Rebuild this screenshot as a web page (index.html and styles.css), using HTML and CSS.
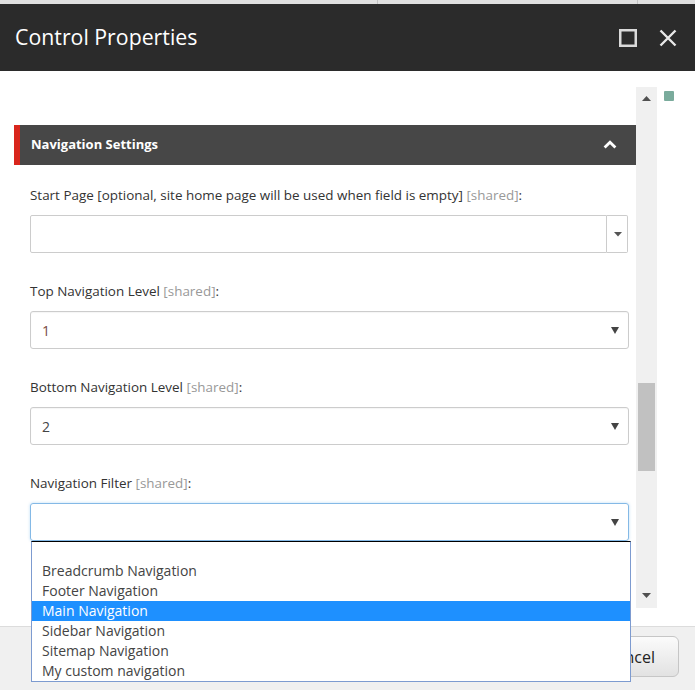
FILE: index.html
```html
<!DOCTYPE html>
<html lang="en">
<head>
<meta charset="utf-8">
<title>Control Properties</title>
<link rel="stylesheet" href="styles.css">
</head>
<body>
<div class="dialog">
  <div class="topstrip">
    <span class="seg seg-a"></span>
    <span class="seg seg-b"></span>
    <span class="seg seg-c"></span>
  </div>
  <header class="titlebar">
    <h1 class="title">Control Properties</h1>
    <div class="winbtns">
      <svg class="wbtn" width="18" height="18" viewBox="0 0 18 18"><rect x="1.25" y="1.25" width="15.5" height="15.5" fill="none" stroke="#dadada" stroke-width="2.5"/></svg>
      <svg class="wbtn" width="18" height="18" viewBox="0 0 18 18"><path d="M1.5 1.5 L16.5 16.5 M16.5 1.5 L1.5 16.5" stroke="#e8e8e8" stroke-width="2.4" fill="none"/></svg>
    </div>
  </header>
  <main class="body">
    <div class="pane">
      <div class="scroller">
        <div class="section-bar">
          <span class="section-title">Navigation Settings</span>
          <svg class="chev" width="14" height="9" viewBox="0 0 14 9"><path d="M1.6 7.6 L7 2.2 L12.4 7.6" stroke="#fff" stroke-width="2.8" fill="none" stroke-linejoin="miter"/></svg>
        </div>
        <div class="fields">
          <div class="field">
            <label class="field-label">Start Page [optional, site home page will be used when field is empty] <span class="shared">[shared]</span>:</label>
            <div class="combo">
              <div class="combo-input"></div>
              <div class="combo-btn"><svg width="8" height="5" viewBox="0 0 8 5"><path d="M0 0 H8 L4 4.5 Z" fill="#555"/></svg></div>
            </div>
          </div>
          <div class="field">
            <label class="field-label">Top Navigation Level <span class="shared">[shared]</span>:</label>
            <div class="select"><span class="select-value value-one">1</span><svg class="caret" width="8" height="7" viewBox="0 0 8 7"><path d="M0 0 H8 L4 7 Z" fill="#444"/></svg></div>
          </div>
          <div class="field">
            <label class="field-label">Bottom Navigation Level <span class="shared">[shared]</span>:</label>
            <div class="select"><span class="select-value">2</span><svg class="caret" width="8" height="7" viewBox="0 0 8 7"><path d="M0 0 H8 L4 7 Z" fill="#444"/></svg></div>
          </div>
          <div class="field field-open">
            <label class="field-label">Navigation Filter <span class="shared">[shared]</span>:</label>
            <div class="select select-focus"><span class="select-value"></span><svg class="caret" width="8" height="7" viewBox="0 0 8 7"><path d="M0 0 H8 L4 7 Z" fill="#444"/></svg></div>
            <ul class="listbox">
              <li class="opt opt-empty"></li>
              <li class="opt">Breadcrumb Navigation</li>
              <li class="opt">Footer Navigation</li>
              <li class="opt opt-selected">Main Navigation</li>
              <li class="opt">Sidebar Navigation</li>
              <li class="opt">Sitemap Navigation</li>
              <li class="opt">My custom navigation</li>
            </ul>
          </div>
        </div>
      </div>
      <div class="scrollbar">
        <div class="sb-btn sb-up"><svg width="9" height="5" viewBox="0 0 9 5"><path d="M0 5 H9 L4.5 0 Z" fill="#505050"/></svg></div>
        <div class="sb-track"><div class="sb-thumb"></div></div>
        <div class="sb-btn sb-down"><svg width="9" height="5" viewBox="0 0 9 5"><path d="M0 0 H9 L4.5 5 Z" fill="#505050"/></svg></div>
      </div>
      <div class="marker"></div>
    </div>
  </main>
  <footer class="footer">
    <button class="btn">Cancel</button>
  </footer>
</div>
</body>
</html>
```

FILE: styles.css
```css
* { box-sizing: border-box; }
html, body { margin: 0; padding: 0; }
body {
  background: #ffffff;
  font-family: "Open Sans", "Liberation Sans", sans-serif;
  color: #333;
  width: 695px;
  height: 690px;
  overflow: hidden;
}
.dialog { width: 695px; height: 690px; display: flex; flex-direction: column; }

.topstrip { height: 4px; display: flex; background: #e0e0e0; }
.seg { display: block; height: 4px; }
.seg-a { width: 377px; }
.seg-b { width: 260px; border-left: 1px solid #c2c2c2; }
.seg-c { flex: 1; border-left: 1px solid #c2c2c2; }

.titlebar {
  height: 67px;
  background: #2b2b2b;
  display: flex;
  align-items: center;
  justify-content: space-between;
  padding: 0 18px 0 15px;
}
.title {
  margin: 0;
  font-weight: 400;
  font-size: 21.3px;
  color: #ffffff;
  padding-bottom: 2px;
}
.winbtns { display: flex; gap: 22px; align-items: center; }
.wbtn { display: block; }

.body { height: 555px; padding-top: 16px; }
.pane { display: flex; height: 521px; }
.scroller { width: 636px; position: relative; }

.section-bar {
  margin: 38px 0 0 14px;
  height: 40px;
  background: #474747;
  border-left: 6px solid #d9261c;
  display: flex;
  align-items: center;
  justify-content: space-between;
  padding: 0 19px 3px 11px;
}
.section-title { color: #fff; font-weight: 700; font-size: 13px; }
.chev { display: block; margin-top: 2px; }

.fields { padding: 20px 7px 0 30px; }
.field { margin-bottom: 28px; }
.field-label {
  display: block;
  font-size: 13.45px;
  line-height: 20px;
  height: 20px;
  margin-bottom: 10px;
  color: #333;
  white-space: nowrap;
}
.shared { color: #999; }

.combo { display: flex; height: 38px; width: 598px; }
.combo-input { flex: 1; border: 1px solid #cccccc; border-radius: 2px 0 0 2px; }
.combo-btn {
  width: 21px;
  border: 1px solid #cccccc;
  border-left: none;
  border-radius: 0 2px 2px 0;
  display: flex;
  align-items: center;
  justify-content: center;
  padding-left: 1px;
}
.combo-btn svg { display: block; }

.select {
  height: 38px;
  border: 1px solid #cccccc;
  border-radius: 3px;
  display: flex;
  align-items: center;
  justify-content: space-between;
  padding: 0 9px 0 11px;
  box-shadow: inset 0 1px 1px rgba(0,0,0,0.04);
}
.select-value { font-size: 14px; color: #444; }
.value-one { color: #7a4a42; }
.caret { display: block; margin-top: 1px; }
.select-focus { border-color: #84b9e6; box-shadow: 0 0 3px rgba(102,175,233,0.45); }

.field-open { position: relative; }
.listbox {
  position: absolute;
  top: 100%;
  left: 1px;
  width: 600px;
  margin: 0;
  padding: 0;
  list-style: none;
  background: #fff;
  border: 1px solid #7d9bd0;
  border-top: 1px solid #000;
  z-index: 5;
}
.opt {
  height: 20px;
  line-height: 20px;
  font-size: 14px;
  padding-left: 10px;
  color: #444;
  white-space: nowrap;
}
.opt-empty { height: 19px; }
.opt-selected { background: #1e90ff; color: #fff; }

.scrollbar {
  width: 21px;
  height: 521px;
  background: #f0f0f0;
  display: flex;
  flex-direction: column;
}
.sb-btn { height: 22px; display: flex; justify-content: center; }
.sb-btn svg { display: block; }
.sb-up { padding-top: 9px; }
.sb-down { padding-top: 7px; }
.sb-track { flex: 1; padding: 0 2px; }
.sb-thumb { margin-top: 274px; height: 88px; background: #c1c1c1; }

.marker {
  width: 10px;
  height: 10px;
  margin: 4px 0 0 7px;
  background: #7aab9c;
  border-radius: 1px;
}

.footer {
  flex: 1;
  background: #f0f0f0;
  border-top: 1px solid #dcdcdc;
  display: flex;
  justify-content: flex-end;
  align-items: flex-start;
  padding: 9px 16px 0 0;
}
.btn {
  height: 41px;
  padding: 0 23px;
  font-family: "Open Sans", "Liberation Sans", sans-serif;
  font-size: 16px;
  color: #222;
  background: linear-gradient(#fbfbfb, #e2e2e2);
  border: 1px solid #c6c6c6;
  border-radius: 6px;
}
```
